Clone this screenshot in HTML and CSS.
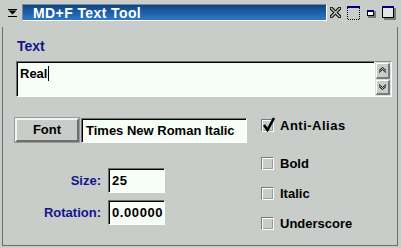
FILE: index.html
```html
<!DOCTYPE html>
<html lang="en">
<head>
    <meta charset="UTF-8">
    <title>MD+F Text Tool</title>
    <link rel="stylesheet" href="styles.css">
</head>
<body>
    <div class="window">
        <div class="titlebar-row">
            <svg class="menu-btn" width="9" height="8" viewBox="0 0 9 8">
                <rect x="0" y="0" width="9" height="1" fill="#000"/>
                <polygon points="0.5,1.5 8.5,1.5 4.5,5.5" fill="#000"/>
                <rect x="0" y="7" width="9" height="1" fill="#000"/>
            </svg>
            <div class="title">MD+F Text Tool</div>
            <svg class="win-icon icon-close" width="11" height="11" viewBox="0 0 11 11">
                <path d="M1.5 1.5 L9.5 9.5 M9.5 1.5 L1.5 9.5" stroke="#000" stroke-width="3.4" stroke-linecap="square"/>
                <path d="M1.5 1.5 L9.5 9.5 M9.5 1.5 L1.5 9.5" stroke="#c8c8c8" stroke-width="1.4" stroke-linecap="square"/>
            </svg>
            <svg class="win-icon icon-shade" width="14" height="14" viewBox="0 0 14 14">
                <rect x="0" y="0" width="13" height="2" fill="#000080"/>
                <path d="M0.5 2 V13.5 H13" stroke="#000" stroke-dasharray="1 1" fill="none"/>
                <path d="M12.5 2 V13" stroke="#000" stroke-dasharray="1 1" fill="none"/>
            </svg>
            <svg class="win-icon icon-min" width="9" height="8" viewBox="0 0 9 8">
                <rect x="1" y="1" width="8" height="7" fill="#7a7a7a"/>
                <rect x="0.5" y="0.5" width="6" height="5" fill="#fff" stroke="#000"/>
                <rect x="0" y="0" width="7" height="2" fill="#000080"/>
            </svg>
            <svg class="win-icon icon-max" width="14" height="14" viewBox="0 0 14 14">
                <rect x="2" y="2" width="12" height="12" fill="#7a7a7a"/>
                <rect x="0.5" y="0.5" width="11" height="11" fill="#e4e4e4" stroke="#000"/>
                <rect x="0" y="0" width="12" height="2" fill="#000080"/>
            </svg>
        </div>

        <div class="panel">
            <div class="label">Text</div>
            <div class="text-row">
                <div class="text-area">Real<span class="cursor"></span></div>
                <div class="spin">
                    <div class="spin-btn">
                        <svg width="9" height="6" viewBox="0 0 9 6">
                            <path d="M1 3.5 L4.5 0.5 L8 3.5 M1 5.5 L4.5 2.5 L8 5.5" stroke="#000" fill="none"/>
                        </svg>
                    </div>
                    <div class="spin-btn">
                        <svg width="9" height="6" viewBox="0 0 9 6">
                            <path d="M1 0.5 L4.5 3.5 L8 0.5 M1 2.5 L4.5 5.5 L8 2.5" stroke="#000" fill="none"/>
                        </svg>
                    </div>
                </div>
            </div>

            <div class="form">
                <div class="left-col">
                    <div class="font-row">
                        <div class="button">Font</div>
                        <div class="field font-field">Times New Roman Italic</div>
                    </div>
                    <div class="num-row size-row">
                        <span class="label num-label">Size:</span>
                        <div class="field num-field">25</div>
                    </div>
                    <div class="num-row">
                        <span class="label num-label">Rotation:</span>
                        <div class="field num-field">0.00000</div>
                    </div>
                </div>
                <div class="right-col">
                    <div class="check check-first">
                        <span class="box">
                            <svg class="tick" width="14" height="15" viewBox="0 0 14 15">
                                <path d="M2 8 L5.5 13 L12 1" stroke="#000" stroke-width="2.6" fill="none"/>
                            </svg>
                        </span>
                        <span class="wide">Anti-Alias</span>
                    </div>
                    <div class="check check-bold"><span class="box"></span>Bold</div>
                    <div class="check"><span class="box"></span>Italic</div>
                    <div class="check"><span class="box"></span>Underscore</div>
                </div>
            </div>
        </div>
    </div>
</body>
</html>
```

FILE: styles.css
```css
body {
    margin: 0;
    background-color: #c9cdc9;
    font-family: 'Liberation Sans', Arial, sans-serif;
    font-weight: bold;
    font-size: 13px;
    color: #000;
}

.window {
    width: 401px;
    height: 248px;
    display: flex;
    flex-direction: column;
}

/* Barra de titulo */
.titlebar-row {
    height: 27px;
    display: flex;
    align-items: flex-start;
    flex-shrink: 0;
}

.menu-btn {
    margin: 9px 0 0 8px;
}

.title {
    margin: 4px 0 0 5px;
    width: 293px;
    height: 15px;
    padding-left: 10px;
    font-size: 14px;
    letter-spacing: 0.4px;
    line-height: 16px;
    color: #fff;
    background: linear-gradient(#0d4585, #2f78c6);
    border-top: 1px solid #7d8a96;
    border-left: 1px solid #7d8a96;
    border-bottom: 1px solid #fff;
    border-right: 1px solid #fff;
}

.icon-close { margin: 7px 0 0 3px; }
.icon-shade { margin: 6px 0 0 6px; }
.icon-min   { margin: 10px 0 0 6px; }
.icon-max   { margin: 6px 0 0 6px; }

/* Panel principal */
.panel {
    flex: 1;
    margin: 0 3px 2px 2px;
    border: 1px solid #6c6c6c;
    border-top: none;
}

.label {
    color: #14148c;
}

.panel > .label {
    margin: 12px 0 0 14px;
    font-size: 14px;
    line-height: 15px;
}

.text-row {
    display: flex;
    margin: 7px 0 0 13px;
}

.field,
.text-area {
    background-color: #f7fdf7;
    border-top: 1px solid #6e6e6e;
    border-left: 1px solid #6e6e6e;
    border-bottom: 1px solid #fff;
    border-right: 1px solid #fff;
    box-shadow: inset 1px 1px #000;
    box-sizing: border-box;
}

.text-area {
    width: 359px;
    height: 36px;
    padding: 4px 0 0 3px;
    line-height: 15px;
}

.cursor {
    display: inline-block;
    width: 1px;
    height: 15px;
    background-color: #000;
    vertical-align: top;
    margin-left: 1px;
}

.spin {
    width: 17px;
    height: 36px;
    box-sizing: border-box;
    background-color: #dcdfdc;
    border-top: 1px solid #8a8a8a;
    border-right: 1px solid #fff;
    border-bottom: 1px solid #fff;
    display: flex;
    flex-direction: column;
    gap: 1px;
    padding: 1px;
}

.spin-btn {
    height: 16px;
    display: flex;
    align-items: center;
    justify-content: center;
    background-color: #c9cdc9;
    border-top: 1px solid #fff;
    border-left: 1px solid #fff;
    border-bottom: 2px solid #7a7a7a;
    border-right: 2px solid #7a7a7a;
    box-sizing: border-box;
}

/* Formulario */
.form {
    display: flex;
    margin: 21px 0 0 12px;
}

.left-col {
    width: 232px;
}

.font-row {
    display: flex;
    gap: 2px;
}

.button {
    width: 64px;
    height: 24px;
    box-sizing: border-box;
    background-color: #c9cdc9;
    border: 2px solid;
    border-color: #f4f4f4 #6e6e6e #6e6e6e #f4f4f4;
    box-shadow: 0 0 0 1px #9a9a9a;
    text-align: center;
    line-height: 19px;
}

.font-field {
    flex: 1;
    height: 25px;
    padding-left: 4px;
    line-height: 24px;
}

.num-row {
    display: flex;
    align-items: center;
    gap: 7px;
    margin-top: 7px;
}

.size-row {
    margin-top: 25px;
}

.num-label {
    width: 86px;
    text-align: right;
}

.num-field {
    width: 57px;
    height: 25px;
    padding-left: 3px;
    letter-spacing: 0.6px;
    line-height: 24px;
}

.right-col {
    margin-left: 14px;
    display: flex;
    flex-direction: column;
}

.check {
    display: flex;
    align-items: center;
    gap: 6px;
    height: 13px;
    margin-top: 17px;
}

.check-first {
    margin-top: 1px;
}

.check-bold {
    margin-top: 25px;
}

.wide {
    letter-spacing: 0.5px;
}

.box {
    position: relative;
    width: 13px;
    height: 13px;
    box-sizing: border-box;
    background-color: #c9cdc9;
    border-top: 1px solid #7a7a7a;
    border-left: 1px solid #7a7a7a;
    border-bottom: 1px solid #fff;
    border-right: 1px solid #fff;
    box-shadow: inset 1px 1px #fff, inset -1px -1px #9a9a9a;
}

.tick {
    position: absolute;
    left: 0;
    top: -3px;
}
```
